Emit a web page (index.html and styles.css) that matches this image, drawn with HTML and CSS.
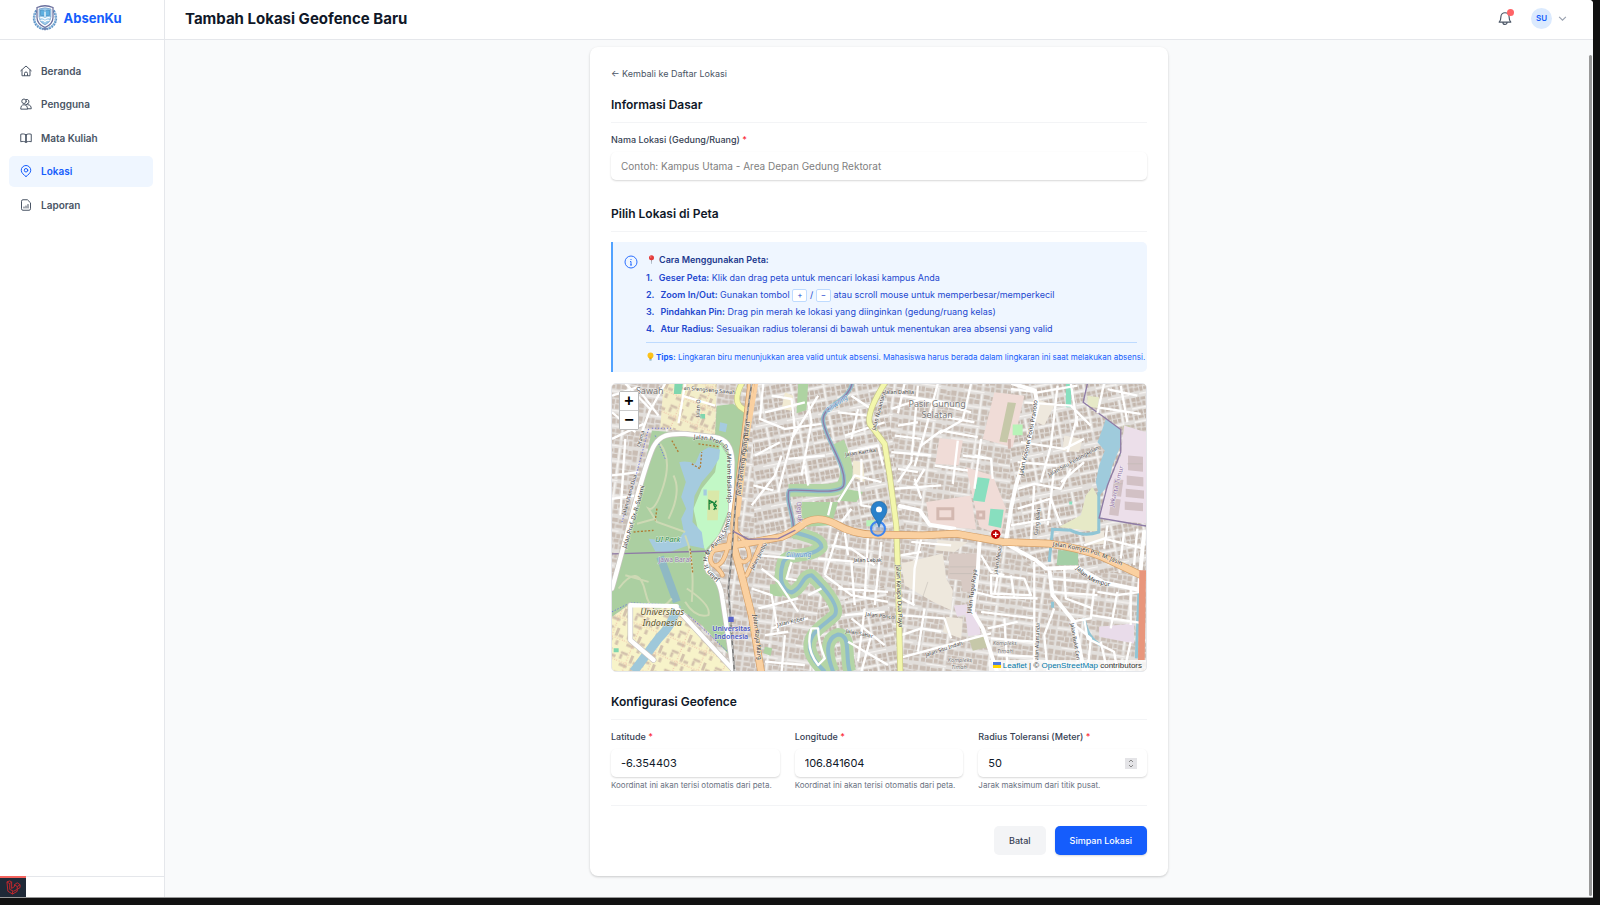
FILE: index.html
```html
<!DOCTYPE html>
<html lang="id">
<head>
<meta charset="utf-8">
<title>Tambah Lokasi Geofence Baru - AbsenKu</title>
<link rel="stylesheet" href="styles.css">
</head>
<body>
<div class="app">
  <aside class="sidebar">
    <a class="brand" href="#">
      <svg class="brand-logo" viewBox="0 0 52 52" aria-hidden="true">
        <g fill="none" stroke="#5f95c8" stroke-width="5" stroke-dasharray="4 1.5"><path d="M9 11C-1 27 5 43 22 48"/><path d="M43 11C53 27 47 43 30 48"/></g>
        <g fill="none" stroke="#8fb9dd" stroke-width="2"><path d="M5 16c-3 14 3 26 15 31M47 16c3 14-3 26-15 31"/></g>
        <path d="M10 5Q26-2 42 5v20q0 13-16 20Q10 38 10 25z" fill="#fff" stroke="#6a6f9d" stroke-width="2.5"/>
        <path d="M14 8q12-5 24 0v16q0 10-12 16Q14 34 14 24z" fill="#9ccbea" stroke="#5a82ba"/>
        <path d="M17 10q6-1 9 3 3-4 9-3v11q-6-1-9 3-3-4-9-3z" fill="#5eb0e0" stroke="#377eb2"/>
        <path d="M26 13v11M15 26q6-2 11 2 5-4 11-2M17 31q5-2 9 2 4-4 9-2" fill="none" stroke="#fff" stroke-width="2.5"/>
        <path d="M20 48l6-5 6 5-6 3z" fill="#7188b5"/>
      </svg>
      <span>AbsenKu</span>
    </a>
    <nav class="nav">
      <a class="nav-item" href="#"><svg class="icon" viewBox="0 0 24 24"><path d="M1.500 11.500 12 2l10.500 9.500M4 10v11.500h16V10M9 21v-4a3 3 0 0 1 6 0v4"/></svg>Beranda</a>
      <a class="nav-item" href="#"><svg class="icon" viewBox="0 0 24 24"><circle cx="8" cy="6.500" r="4.500"/><path d="M12 3a4.500 4.500 0 1 1 3 8.500M1.500 21.500c0-5 2-8 6.500-8s7 3 7 8zM16 13.500c4-.5 6.500 3 6.500 8H15M11 14l5-2.500"/></svg>Pengguna</a>
      <a class="nav-item" href="#"><svg class="icon" viewBox="0 0 24 24"><path d="M12 5.500C9 3.500 5 3.500 1.500 4.500v15C5 18.500 9 18.500 12 20.500zM12 5.500c3-2 7-2 10.500-1v15C19 18.500 15 18.500 12 20.500z"/></svg>Mata Kuliah</a>
      <a class="nav-item nav-item-active" href="#" aria-current="page"><svg class="icon" viewBox="0 0 24 24"><path d="M12 23c-4-3-9.500-7-9.500-12.500a9.500 9.500 0 0 1 19 0C21.500 16 16 20 12 23z"/><circle cx="12" cy="10.500" r="3.500"/></svg>Lokasi</a>
      <a class="nav-item" href="#"><svg class="icon" viewBox="0 0 24 24"><path d="M14 1.500H6a3 3 0 0 0-3 3v15a3 3 0 0 0 3 3h12a3 3 0 0 0 3-3V8.500zM8 18v-2M12 18v-4M16 18v-7"/></svg>Laporan</a>
    </nav>
    <div class="sidebar-foot"></div>
  </aside>

  <header class="topbar">
    <h1>Tambah Lokasi Geofence Baru</h1>
    <div class="topbar-tools">
      <button class="bell" type="button" aria-label="Notifikasi">
        <svg class="icon" viewBox="0 0 24 24"><path d="M2 19h20c-2-2-3-4-3-9a7 7 0 0 0-14 0c0 5-1 7-3 9zM8.500 19.500a3.500 3.500 0 0 0 7 0"/></svg>
        <span class="bell-dot"></span>
      </button>
      <button class="profile" type="button" aria-label="Profil">
        <span class="avatar">SU</span>
        <svg class="chevron" viewBox="0 0 8 8"><path d="M1 2.500l3 3 3-3"/></svg>
      </button>
    </div>
  </header>

  <main class="main">
    <form class="card">
      <a class="back" href="#">← Kembali ke Daftar Lokasi</a>

      <section>
        <h2>Informasi Dasar</h2>
        <div class="field">
          <label for="nama">Nama Lokasi (Gedung/Ruang) <b class="req">*</b></label>
          <input id="nama" type="text" placeholder="Contoh: Kampus Utama - Area Depan Gedung Rektorat">
        </div>
      </section>

      <section class="section-map">
        <h2>Pilih Lokasi di Peta</h2>
        <div class="info">
          <svg class="info-icon" viewBox="0 0 14 14"><circle cx="7" cy="7" r="6"/><path d="M7 6.500v3.500M6 6.500h1M6 10h2M7 4v1"/></svg>
          <div class="info-body">
            <h3><svg class="emoji" viewBox="0 0 10 10"><path d="M4.500 5h1L5.200 10h-.4z" fill="#8795a1"/><circle cx="5" cy="3" r="2.800" fill="#e23b3b"/><circle cx="4.200" cy="2.200" r=".8" fill="#ff8a80"/></svg>Cara Menggunakan Peta:</h3>
            <ol class="steps">
              <li><span class="num">1.</span><strong>Geser Peta:</strong> Klik dan drag peta untuk mencari lokasi kampus Anda</li>
              <li><span class="num">2.</span><strong>Zoom In/Out:</strong> Gunakan tombol <kbd>+</kbd> / <kbd>−</kbd> atau scroll mouse untuk memperbesar/memperkecil</li>
              <li><span class="num">3.</span><strong>Pindahkan Pin:</strong> Drag pin merah ke lokasi yang diinginkan (gedung/ruang kelas)</li>
              <li><span class="num">4.</span><strong>Atur Radius:</strong> Sesuaikan radius toleransi di bawah untuk menentukan area absensi yang valid</li>
            </ol>
            <p class="tips"><svg class="emoji" viewBox="0 0 10 10"><circle cx="5" cy="3.800" r="3.300" fill="#fcc21b"/><path d="M3.500 6h3l-.3 2H3.800z" fill="#f2a600"/><path d="M3.800 8h2.400v1.500H3.800z" fill="#82aec0"/></svg><strong>Tips:</strong> Lingkaran biru menunjukkan area valid untuk absensi. Mahasiswa harus berada dalam lingkaran ini saat melakukan absensi.</p>
          </div>
        </div>

        <div class="map">
          <svg class="map-canvas" viewBox="20 23 1606 867" preserveAspectRatio="xMidYMid slice" role="img" aria-label="Peta lokasi">
            <defs>
              <pattern id="houses" width="132" height="104" patternUnits="userSpaceOnUse" patternTransform="rotate(8)">
                <path fill="#c9bdb4" d="M3 4h17v13H3zM23 2h10v16H23zM36 5h19v10H36zM58 3h11v14H58zM80 3h18v12H80zM101 6h9v12h-9zM113 2h16v15h-16zM4 21h9v15H4zM16 23h18v11H16zM38 19h12v16H38zM53 21h16v12H53zM79 20h12v15H79zM94 22h19v10H94zM116 20h12v17h-12zM3 50h14v12H3zM20 48h11v16H20zM34 51h18v10H34zM55 49h14v13H55zM79 47h18v15H79zM100 50h11v13h-11zM114 48h14v14h-14zM4 67h20v10H4zM27 66h12v15H27zM43 65h10v12H43zM56 66h13v15H56zM80 66h10v14H80zM93 65h16v11H93zM112 67h16v14h-16zM3 82h12v12H3zM18 84h20v11H18zM42 81h11v13H42zM56 85h14v10H56zM79 84h16v10H79zM99 81h10v15H99zM113 85h15v10h-15z"/>
                <path fill="none" stroke="#f6f4f2" stroke-width="4" d="M0 42h74V0M74 42v40M74 42h30M20 100h60"/>
              </pattern>
              <pattern id="dense" width="96" height="122" patternUnits="userSpaceOnUse" patternTransform="rotate(-11)">
                <path fill="#c3b6ac" d="M3 3h13v11H3zM18 2h10v14H18zM31 4h14v9H31zM48 2h8v13h-8zM67 3h12v12H67zM82 2h11v14H82zM4 17h10v12H4zM17 19h14v9H17zM34 16h9v14h-9zM46 18h11v11H46zM68 18h9v13h-9zM80 19h13v9H80zM3 42h12v10H3zM18 40h12v14H18zM33 42h10v11H33zM46 40h12v13H46zM67 40h14v10H67zM84 41h9v14h-9zM3 56h9v14H3zM15 57h15v9H15zM33 56h12v13H33zM48 56h9v12h-9zM67 54h10v14H67zM80 58h13v9H80zM3 81h14v9H3zM20 80h9v13h-9zM32 82h13v9H32zM48 80h10v13H48zM67 80h12v12H67zM82 81h11v10H82zM3 94h11v13H3zM17 96h13v10H17zM33 94h9v14h-9zM45 96h12v9H45zM67 96h14v10H67zM84 94h9v13h-9z"/>
                <path fill="none" stroke="#f6f4f2" stroke-width="4" d="M0 35h70M62 0v80M0 75h62M30 115h66"/>
              </pattern>
              <pattern id="campus" width="70" height="62" patternUnits="userSpaceOnUse" patternTransform="rotate(22)">
                <path fill="#d3c2ad" d="M5 5h22v8H5zM5 15h8v14H5zM38 6h9v25h-9zM50 22h14v9H50zM12 40h25v9H12zM48 42h9v14h-9z"/>
                <path fill="none" stroke="#e79a90" stroke-width="2" stroke-dasharray="3 5" d="M30 0v62M0 36h70"/>
              </pattern>
              <path id="road-agung" d="M406 362 414 300 440 90"/>
              <path id="road-wiyata" d="M266 190C330 193 362 208 366 240L368 420"/>
              <path id="road-sujadi" d="M62 520C80 470 90 430 130 290"/>
              <path id="road-panda" d="M342 612C300 580 296 550 325 520 372 475 382 440 378 340"/>
              <path id="road-jasin" d="M1345 512C1440 524 1520 546 1612 606"/>
              <path id="road-kelapa" d="M874 570 886 850"/>
              <path id="road-kolonel" d="M1256 300C1270 220 1290 170 1304 40"/>
              <path id="road-tugu" d="M1100 715 1124 535"/>
              <path id="road-mempor" d="M1415 580C1450 620 1480 632 1570 640"/>
              <path id="road-raya" d="M444 720 462 889"/>
            </defs>

            <rect x="20" y="23" width="1606" height="867" fill="#e2dfdc"/>
            <rect x="20" y="23" width="1606" height="867" fill="url(#houses)"/>
            <path fill="#e2dfdc" d="M440 23h400l60 440-300-30-150 70zM1220 23h406v570h-330l-80-90zM640 700l200-70 50 260H620z"/>
            <path fill="url(#dense)" d="M440 23h400l60 440-300-30-150 70zM1220 23h406v570h-330l-80-90zM640 700l200-70 50 260H620z"/>

            <!-- land use -->
            <path fill="#f3eec9" d="M175 23h160l-5 155-120-15-45-5z"/><path fill="url(#campus)" d="M175 23h160l-5 155-120-15-45-5z"/>
            <path fill="#f7f3c9" d="M70 690 215 700 390 890H20V725z"/><path fill="url(#campus)" d="M70 690 215 700 390 890H20V725z"/>
            <path fill="#abcfa1" d="M140 165 330 180 335 90 385 85 418 110 395 300 380 440 322 520 310 570 348 640 378 760 372 840 290 750 215 695 70 688 20 725V640L60 520 100 360z"/>
            <path fill="#c2f8c6" d="M345 205 372 250V400L340 480 300 525 280 470 265 400 290 340 330 290z"/>
            <path fill="#d9e8a9" d="M308 345h35l-5 90h-32z"/>
            <path fill="#a5cbdf" d="M222 260Q245 255 270 265L285 230 310 215 345 222 342 250 320 285 290 320 268 362 262 440 290 470 297 520 250 510 190 532 150 528 130 490 215 500 236 470 228 430 243 400 228 365 242 320z"/>
            <path fill="#a5cbdf" d="M345 140l22 5-5 25-20-5zM295 342h10v18h-10z"/>
            <path fill="none" stroke="#8fb9c4" stroke-width="24" d="M165 545 215 680"/>
            <path fill="none" stroke="#9fc8da" stroke-width="27" d="M213 692Q210 740 160 790L85 890"/>
            <path fill="#7fd6ae" d="M208 25h25l-5 30h-22zM285 115h15v14h-15zM25 820h15v12H25z"/>
            <path fill="#aed3a2" d="M590 380h110l-20 70-90 5zM495 627h36v38l-36-5zM480 815l22 5-5 22-22-8zM720 340l55 10-20 30-60-5zM580 23h30l-5 80-30 10z"/>
            <path fill="#f1ead2" d="M745 255l30 5 5 60-35-15zM540 50l25 10-5 45-30-5z"/>
            <path fill="#f0dcd7" d="M1170 50 1260 60 1225 215 1135 190zM1005 188 1075 195 1062 270 992 265zM965 380 1100 360 1115 462 975 450zM1085 275 1165 300 1205 400 1190 480 1125 455z"/>
            <path fill="none" stroke="#d3b8b0" stroke-width="9" d="M1000 400h45v30h-45zM1120 410h18v18h-18zM1215 190v30"/>
            <path fill="#c6c8a9" d="M1210 80 1235 82 1208 201 1185 198zM1095 795l40-15 20 35-50 12zM1557 150h22v65h-22z"/>
            <path fill="#88dfbf" d="M1120 305 1156 310 1141 380 1105 375zM1158 400 1198 403 1190 458 1152 450zM1550 232h7v16h-7zM1562 232h8v16h-8zM1540 270h14v17h-14zM1395 378h9v9h-9zM1385 25h16v70h-16z"/>
            <path fill="#b8f3b8" d="M1225 147h30v32h-30zM950 640h18v16h-18zM785 435h25v18h-25z"/>
            <path fill="#a4cfa7" d="M1362 525h60v45h-65z"/>
            <path fill="#eee8dd" d="M890 565 1015 535 1025 610 1045 645 1040 705 985 680 900 630zM1000 495l90 5-40 30-60-5zM1025 725l50 5-5 60-55-20zM1300 70l50 20-30 60-35-15zM1380 180l55 10-10 40-50-5zM1440 480l60-15v40l-55 5z"/>
            <path fill="#d8cac4" d="M1035 535h85v80h-20v35h-25l-5-35-40-5z"/>
            <path fill="#e9dcea" d="M1048 692l40-5v30l-30 8zM1082 715l35-5 12 68-38 5zM1485 755l105-10v60l-105-20z"/>
            <path fill="#ecdfea" d="M1560 150 1626 170V445L1485 430 1508 340 1550 240z"/>
            <path fill="#d2c1c5" d="M1530 310l28 4-7 50-28-4zM1522 368l28 4-7 50-28-4zM1572 240l45 4v45l-45-5zM1568 300l50 5v28l-50-5zM1565 340l55 5v25l-55-5zM1562 378l55 5v25l-55-5z"/>
            <path fill="#e6e9c7" d="M1465 335 1485 370 1480 470 1365 455 1430 420 1445 360zM1450 60l35 5-5 32-30-5z"/>
            <path fill="#9fcbdc" d="M1505 130 1550 162V210L1525 270 1512 330 1485 362 1475 320 1485 270 1502 225 1480 200 1495 160z"/>
            <path fill="none" stroke="#90c5d5" stroke-width="9" d="M1484 350V470Q1440 485 1400 465L1345 462 1335 560M1440 730Q1450 790 1490 810M1605 640 1597 850M1345 680v18"/>

            <!-- river -->
            <path fill="none" stroke="#b4d5a6" stroke-width="38" stroke-linejoin="round" d="M700 200C730 270 730 300 715 330 690 355 600 340 552 345M565 470C600 480 650 490 650 515 620 550 550 530 535 560 520 610 530 645 560 652 595 640 590 600 620 600 640 620 710 690 690 720 660 750 610 770 615 820 620 850 640 870 660 890M685 890C665 840 660 790 700 778 740 780 720 840 735 890"/>
            <path fill="none" stroke="#8fbccb" stroke-width="12" stroke-linejoin="round" d="M742 23C730 80 650 90 655 135 660 190 732 280 716 332 700 360 600 340 552 345 540 380 570 420 565 470 600 480 650 490 650 515 620 550 550 530 535 560 520 610 530 645 560 652 595 640 590 600 620 600 640 620 710 690 690 720 660 750 610 770 615 820 620 850 640 870 660 890M685 890C665 840 660 790 700 778 740 780 720 840 735 890"/>
            <path fill="none" stroke="#8e7ba6" stroke-width="4" d="M742 23C730 80 650 90 655 135 660 190 732 280 716 332 700 360 600 340 552 345 540 380 570 420 565 465L520 490 430 492 385 468M20 536 300 528 385 500M1450 23 1437 80 1500 125 1550 162V230L1510 330 1485 428 1626 452"/>

            <!-- minor streets -->
            <g fill="none" stroke="#fff" stroke-width="7" stroke-linejoin="round">
              <path d="M20 60 95 35 160 120M60 23 135 100 110 170M20 190l95-45M20 300l80-10M20 370l75-10M60 190 45 420M180 23l-50 90M20 110l70 60M230 60l100 30M240 23l-20 120"/>
              <path d="M475 23 465 130 540 160 650 145M500 60l60 10 10 90-30 110-20 80M610 80l10 60-30 160M450 240l75-40M440 390 510 300l20-60M445 330l60 15M640 60 560 190M660 240l-110 10M600 270l10 60M480 110l120-30"/>
              <path d="M740 60l60 40M700 110l90 10M720 180l120-40M730 230l90-20 15 60M700 380l50-80 80 20M760 100l-20 90M760 320l10 70 60 10M680 380l-10 40M740 400l-30 40M770 250v70"/>
              <path d="M460 540l110 10M470 580l50 40 60 90M440 640l60 20 20 110M460 700l120-30M560 560l-15 50 30 5M500 760l110-30M480 780l70-10M610 660l40-20M700 470l-40 130M680 510l60 10 70 50M720 470l10 70M640 550l120 10M660 600l80 60 110 20M740 560l10 130M700 640l150 10M790 480l-10 190M830 500l-20 190M720 720l120-10M740 730l100 80M780 700l-20 160M730 800l120 70M800 780l-30 110M480 860l120 10M540 780l-10 110M620 760q-20 60 20 110l20-20q-20-50-20-90z"/>
              <path d="M860 100l90-30 150 40M900 23l-20 90M940 30 920 260l-40 60M1000 23l-40 150-30 100M870 180l80 10M1100 23l-25 110-70 40M950 210l60-45 110 20M860 230l120 10M870 340l140-10M990 270l100 15M880 280l60 10M1060 195l-15 130M930 310l20 60M1075 240l85 10M1130 190l-20 150M890 60l130 20M880 150l60-10M1000 120l110 20M960 280l-30 50M1110 240l50 10 5 60"/>
              <path d="M1220 40l80 10 120-20M1260 80l140 10 60 60M1250 200l130 20 60-30M1360 30l-20 180-30 110M1420 120l-30 110M1240 340l50-15 80 15 30-60M1240 400l100-30 30 80M1220 450l120-20M1290 330l-10 170M1400 23l20 130M1510 40l90 20M1480 95l130 20M1500 23l-20 90M1550 30l20 110M1240 260l120 10M1330 450l20-170M1440 260l-70 60"/>
              <path d="M920 500l120 10M950 490l-20 90-5 110M890 540l60-10M880 720l140 10 20 60M890 780l60-20 60 10M880 850l280-75M870 660l60 30M960 700l-20 130M1130 540l30 50 40 10M1160 600l100 10 20 50-120-5zM1180 600l-10 60M1220 600l10 70M1290 560v330M1130 710l160 20M1150 760l90-20M1160 790l130 10M1180 840l110 5M1200 730l10 160M1110 650l60 15 130 5"/>
              <path d="M1340 610l110 10M1380 580l5 90 80 30M1340 650l140 10M1470 640l-10 90-60 10M1460 720l160 25M1480 650l60 10 70-10M1540 650l-20 110M1580 640v110M1440 730l10 60 80 40 10 60M1490 800l20 90M1580 800l-20 90M1350 700l-30 80 10 110M1400 740l60 50-10 100M1440 510l60-20 120 30M1510 450l-10 70M1560 470l-10 80M1600 460l-10 110"/>
            </g>
            <g fill="none" stroke="#bcb6b1" stroke-width="1.500"><path d="M1035 575h85M1035 595h85M1530 325h25M1570 265h45M970 620l-20 60M905 240l80 10"/></g>
            <g fill="none" stroke="#cdd9b4" stroke-width="6"><path d="M165 205Q200 250 175 330T130 400L155 440 240 470M150 430 95 445M205 300Q230 350 190 430M240 480Q270 550 260 680M40 640Q100 560 120 650T200 670M60 600l70 20M245 640Q320 690 310 720 270 730 240 680"/></g>
            <g fill="none" stroke="#b07b34" stroke-width="4" stroke-dasharray="6 5"><path d="M200 195l20 35M280 205l60 8M260 265l25 15 5-50M155 400l-5 35M85 470l60-5M255 520l8 75"/></g>
            <g fill="none" stroke="#7277e0" stroke-width="3" stroke-dasharray="4 5"><path d="M130 160 95 290 50 440M140 158h60M150 180l30 70M20 710 75 683 215 690M250 720 370 832 350 640"/></g>

            <!-- white secondary roads -->
            <g fill="none" stroke-linejoin="round" stroke-linecap="round">
              <path stroke="#c8c5c0" stroke-width="17" d="M20 640C60 500 120 250 148 208 165 180 190 173 240 175L330 185Q380 192 382 260L378 400Q375 450 328 510 292 560 310 590 345 610 352 670L385 890M75 690v105l70 60M215 700 385 885"/>
              <path stroke="#fff" stroke-width="13" d="M20 640C60 500 120 250 148 208 165 180 190 173 240 175L330 185Q380 192 382 260L378 400Q375 450 328 510 292 560 310 590 345 610 352 670L385 890M75 690v105l70 60M75 690l140 3M215 700 385 885"/>
              <path stroke="#fff" stroke-width="12" d="M1225 23 1292 45 1300 90 1265 230 1235 330 1220 400 1205 495M1205 505 1295 555 1325 580 1420 577 1500 622 1612 645M1335 580 1345 660 1410 740 1440 890M1125 500 1120 590 1105 710 1135 760 1178 890M885 392 945 405 975 448 1050 460M1620 470 1605 640"/>
            </g>

            <!-- main roads -->
            <g fill="none" stroke-linejoin="round" stroke-linecap="round">
              <path stroke="#c8c98a" stroke-width="18" d="M840 23Q785 110 795 145L840 205 855 300 875 450 880 600 887 895M410 23q-25 50-5 70l25 18"/>
              <path stroke="#f3f7ac" stroke-width="14" d="M840 23Q785 110 795 145L840 205 855 300 875 450 880 600 887 895M410 23q-25 50-5 70l25 18"/>
              <path stroke="#d6a068" stroke-width="23" d="M440 15 405 300 388 430 388 520 410 600 440 720 470 900M330 520 530 485Q565 470 600 442 640 420 690 445 750 480 820 478L955 480 1055 475 1195 500 1335 505Q1435 520 1495 545L1622 605"/>
              <path stroke="#d6a068" stroke-width="14" d="M330 520Q305 550 325 570 360 580 375 480M395 470Q440 520 432 550 415 570 400 550M470 500Q440 570 425 600M330 572Q350 590 352 600"/>
              <path stroke="#fad0a0" stroke-width="19" d="M440 15 405 300 388 430 388 520 410 600 440 720 470 900M330 520 530 485Q565 470 600 442 640 420 690 445 750 480 820 478L955 480 1055 475 1195 500 1335 505Q1435 520 1495 545L1622 605"/>
              <path stroke="#fad0a0" stroke-width="10" d="M330 520Q305 550 325 570 360 580 375 480M395 470Q440 520 432 550 415 570 400 550M470 500Q440 570 425 600M330 572Q350 590 352 600M455 20 425 200 400 420"/>
              <path stroke="#777" stroke-width="5" d="M440 23 395 340 378 560 370 640 388 890"/>
              <path stroke="#c9c9c9" stroke-width="3" stroke-dasharray="12 12" stroke-linecap="butt" d="M440 23 395 340 378 560 370 640 388 890"/>
              <path stroke="#e8967c" stroke-width="20" stroke-linecap="butt" d="M1616 585 1612 855"/>
              <path stroke="#8e7ba6" stroke-width="4" d="M385 468 430 492 520 490 570 465"/>
            </g>

            <!-- symbols -->
            <path fill="none" stroke="#16843a" stroke-width="4" d="M312 403v-28l10 5-10 5M334 376l-8 12 8 14M320 378l14 12-8 14"/>
            <path fill="#5963c8" d="M370 725h16v16h-16z"/>
            <circle cx="1174" cy="477" r="14" fill="#bf0000"/><path stroke="#fff" stroke-width="4" d="M1166 477h16M1174 469v16"/>

            <!-- labels -->
            <g class="map-place">
              <text x="92" y="54">Sawah</text>
              <text x="998" y="95" text-anchor="middle">Pasir Gunung</text><text x="998" y="128" text-anchor="middle">Selatan</text>
            </g>
            <g class="map-green"><text x="150" y="499">UI Park</text></g>
            <g class="map-campus"><text x="171" y="719" text-anchor="middle">Universitas</text><text x="171" y="752" text-anchor="middle">Indonesia</text></g>
            <g class="map-station"><text x="379" y="767" text-anchor="middle">Universitas</text><text x="379" y="792" text-anchor="middle">Indonesia</text></g>
            <g class="map-border"><text x="160" y="561">Jawa Barat</text><text transform="translate(1528 395)rotate(-76)">Jakarta Timur</text><text transform="translate(575 380)rotate(85)">Depok</text></g>
            <g class="map-water"><text x="543" y="545">Ciliwung</text><text transform="translate(668 112)rotate(-35)">Ciliwung</text></g>
            <g class="map-road">
              <text><textPath href="#road-agung">Jalan Lenteng Agung Barat</textPath></text>
              <text><textPath href="#road-wiyata">Jalan Prof. Dr. Miriam Budiardjo</textPath></text>
              <text><textPath href="#road-sujadi">Jalan Prof. Dr. R. Sutami</textPath></text>
              <text><textPath href="#road-panda">Jalan Ir. H.M. Pandji Soeroso</textPath></text>
              <text><textPath href="#road-jasin">Jalan Komjen Pol. M. Jasin</textPath></text>
              <text><textPath href="#road-kelapa">Jalan Kelapa Dua Raya</textPath></text>
              <text><textPath href="#road-kolonel">Jalan Kolonel Polisi Pranoto</textPath></text>
              <text><textPath href="#road-tugu">Jalan Tugu Raya</textPath></text>
              <text><textPath href="#road-mempor">Jalan Mempor</textPath></text>
              <text><textPath href="#road-raya">Jalan Raya Marg</textPath></text>
            </g>
            <g class="map-street">
              <text transform="translate(722 243)rotate(-9)">Jalan Kartika</text>
              <text x="746" y="560">Jalan Lebak</text>
              <text transform="translate(518 755)rotate(-14)">Jalan Kober</text>
              <text transform="translate(722 772)rotate(12)">Jalan Sahar</text>
              <text transform="translate(782 722)rotate(7)">Jalan Poncol</text>
              <text x="840" y="54">Jalan Dahlia</text>
              <text transform="translate(964 845)rotate(-18)">Jalan Situ Indah</text>
              <text transform="translate(1178 597)rotate(-80)">Jalan Melati</text>
              <text transform="translate(1335 303)rotate(-29)">Jalan Situ Pedongkelan</text>
              <text transform="translate(1300 480)rotate(-84)">Gang Bakti</text>
              <text transform="translate(1398 745)rotate(80)">Jalan Bukit Cen</text>
              <text transform="translate(1302 860)rotate(-88)">Jalan Alamanda</text>
              <text transform="translate(445 584)rotate(-62)">Jalan Jambu</text>
              <text transform="translate(235 42)rotate(5)">an Srengseng Sawah</text>
              <text transform="translate(105 215)rotate(-75)">Utama</text>
              <text transform="translate(60 420)rotate(-74)">Jalan Utama Dua</text>
              <text transform="translate(812 165)rotate(-75)">Jalan Nusantara</text>
              <text transform="translate(283 125)rotate(-88)">Jalan O</text>
            </g>
            <g class="map-estate"><text x="1165" y="811">Kompleks</text><text x="1178" y="833">Timah</text><text x="1030" y="862">Kompleks</text><text x="1040" y="882">Timah</text></g>

            <circle cx="820" cy="460" r="21" fill="#3388ff" fill-opacity=".2" stroke="#3c84f0" stroke-width="6"/>
            <path d="M823 456C817 430 799 422 799 402a24 24 0 0 1 48 0c0 20-18 28-24 54z" fill="#2a81cb" stroke="#2068a5" stroke-width="2"/>
            <circle cx="823" cy="402" r="9" fill="#fff"/>
          </svg>
          <div class="zoom">
            <button type="button" aria-label="Perbesar">+</button>
            <button type="button" aria-label="Perkecil">−</button>
          </div>
          <div class="attribution">
            <svg class="flag" viewBox="0 0 8 6"><path fill="#4c7be1" d="M0 0h8v3H0z"/><path fill="#ffd500" d="M0 3h8v3H0z"/></svg>
            <a href="#">Leaflet</a> | © <a href="#">OpenStreetMap</a> contributors
          </div>
        </div>
      </section>

      <section class="section-config">
        <h2>Konfigurasi Geofence</h2>
        <div class="columns">
          <div class="field">
            <label for="lat">Latitude <b class="req">*</b></label>
            <input id="lat" type="text" value="-6.354403">
            <p class="help">Koordinat ini akan terisi otomatis dari peta.</p>
          </div>
          <div class="field">
            <label for="lng">Longitude <b class="req">*</b></label>
            <input id="lng" type="text" value="106.841604">
            <p class="help">Koordinat ini akan terisi otomatis dari peta.</p>
          </div>
          <div class="field">
            <label for="radius">Radius Toleransi (Meter) <b class="req">*</b></label>
            <div class="number">
              <input id="radius" type="number" value="50">
              <svg class="spinner" viewBox="0 0 12 11" aria-hidden="true"><path d="M4 4l2-2 2 2M4 7l2 2 2-2"/></svg>
            </div>
            <p class="help">Jarak maksimum dari titik pusat.</p>
          </div>
        </div>
      </section>

      <div class="actions">
        <button class="btn btn-plain" type="button">Batal</button>
        <button class="btn btn-primary" type="submit">Simpan Lokasi</button>
      </div>
    </form>
  </main>

  <div class="scroll-thumb"></div>
  <button class="debug" type="button" aria-label="Debugbar">
    <svg viewBox="0 0 16 16"><path d="M1 2l3-1 2 1v7l3-2V5l3-2 3 2v3l-3 2v2l-5 3-5-3zM1 2l3 2 2-2M4 4v6l4 2 4-2M9 5l3 2 3-2M12 7v3M7 15v-3"/></svg>
  </button>
</div>
</body>
</html>
```
FILE: styles.css
```css
* {
  box-sizing: border-box;
}

body {
  margin: 0;
  background: #111;
  color: #101828;
  font-family: Inter, "Liberation Sans", sans-serif;
  font-size: 9px;
}

h1, h2, h3, p, ol {
  margin: 0;
  padding: 0;
}

a {
  color: inherit;
  text-decoration: none;
}

button, input {
  margin: 0;
  border: 0;
  padding: 0;
  background: none;
  color: inherit;
  font: inherit;
}

.app {
  position: relative;
  display: grid;
  grid-template-columns: 165px 1fr;
  grid-template-rows: 40px 1fr;
  min-height: calc(100vh - 7px);
  margin: 0 7px 7px 0;
  border-bottom: 1px solid #999;
  border-top-right-radius: 4px;
  background: #f9fafb;
  overflow: hidden;
}

.icon {
  flex: none;
  width: 12px;
  height: 12px;
  fill: none;
  stroke: currentColor;
  stroke-width: 2;
  stroke-linecap: round;
  stroke-linejoin: round;
}

/* Sidebar */
.sidebar {
  display: flex;
  flex-direction: column;
  grid-row: 1 / 3;
  border-right: 1px solid #e5e7eb;
  background: #fff;
}

.brand {
  display: flex;
  align-items: center;
  justify-content: center;
  gap: 5px;
  height: 40px;
  border-bottom: 1px solid #e5e7eb;
  padding: 0 10px 3px 0;
  color: #155dfc;
  font-size: 13px;
  font-weight: 700;
}

.brand-logo {
  width: 26px;
  height: 26px;
}

.nav {
  display: flex;
  flex-direction: column;
  justify-content: space-between;
  height: 165px;
  margin: 15px 11px 0 9px;
}

.nav-item {
  display: flex;
  align-items: center;
  gap: 9px;
  height: 31px;
  border-radius: 5px;
  padding: 0 11px;
  color: #4a5565;
  font-size: 10px;
  font-weight: 600;
}

.nav-item-active {
  background: #eff6ff;
  color: #155dfc;
}

.sidebar-foot {
  height: 21px;
  margin-top: auto;
  border-top: 1px solid #e5e7eb;
}

/* Top bar */
.topbar {
  display: flex;
  align-items: center;
  justify-content: space-between;
  border-bottom: 1px solid #e5e7eb;
  padding: 0 26px 3px 20px;
  background: #fff;
}

.topbar h1 {
  font-size: 15px;
  font-weight: 700;
}

.topbar-tools,
.profile {
  display: flex;
  align-items: center;
}

.topbar-tools {
  gap: 19px;
}

.profile {
  gap: 6px;
}

.bell {
  position: relative;
  display: flex;
  color: #4a5565;
}

.bell .icon {
  width: 14px;
  height: 14px;
}

.bell-dot {
  position: absolute;
  top: -2px;
  right: -2px;
  width: 7px;
  height: 7px;
  border-radius: 50%;
  background: #ff6467;
}

.avatar {
  display: grid;
  place-items: center;
  width: 21px;
  height: 21px;
  border-radius: 50%;
  background: #dbeafe;
  color: #155dfc;
  font-size: 8px;
  font-weight: 600;
}

.chevron {
  width: 9px;
  height: 9px;
  fill: none;
  stroke: #99a1af;
  stroke-width: 1;
}

/* Form card */
.main {
  padding: 7px 20px 21px;
}

.card {
  display: flex;
  flex-direction: column;
  max-width: 578px;
  margin: 0 auto;
  border-radius: 8px;
  padding: 21px;
  background: #fff;
  box-shadow: 0 1px 3px rgb(0 0 0 / 12%), 0 1px 2px rgb(0 0 0 / 8%);
}

.back {
  align-self: flex-start;
  margin-bottom: 17px;
  color: #4a5565;
  line-height: 12px;
}

.card h2 {
  margin-bottom: 10px;
  border-bottom: 1px solid #f3f4f6;
  padding-bottom: 9px;
  font-size: 12px;
  font-weight: 600;
  line-height: 16px;
}

.section-map {
  margin-top: 26px;
}

.section-config {
  margin-top: 22px;
}

.field {
  display: flex;
  flex-direction: column;
}

.field label {
  margin-bottom: 5px;
  color: #364153;
  font-weight: 500;
  line-height: 14px;
}

.req {
  color: #fb2c36;
  font-weight: 500;
}

.field input {
  width: 100%;
  height: 28px;
  border-radius: 5px;
  padding: 0 10px;
  background: #fff;
  font-size: 11px;
  box-shadow: 0 1px 2px rgb(0 0 0 / 16%);
}

.field input::placeholder {
  color: #808080;
  font-size: 10px;
}

.number {
  position: relative;
}

.number input {
  appearance: textfield;
}

.number input::-webkit-inner-spin-button {
  display: none;
}

.spinner {
  position: absolute;
  top: 9px;
  right: 10px;
  width: 12px;
  height: 11px;
  background: #e4e4e7;
  fill: none;
  stroke: #888;
}

.help {
  margin-top: 2px;
  color: #6a7282;
  font-size: 8px;
  line-height: 12px;
}

.columns {
  display: grid;
  grid-template-columns: repeat(3, 1fr);
  gap: 15px;
}

/* Instructions */
.info {
  display: flex;
  gap: 8px;
  border-left: 2px solid #51a2ff;
  border-radius: 0 5px 5px 0;
  padding: 9px 10px;
  background: #eff6ff;
}

.info-icon {
  flex: none;
  width: 14px;
  height: 14px;
  margin: 4px 0 0 1px;
  fill: none;
  stroke: #2b6fff;
}

.info-body {
  flex: 1;
  min-width: 0;
}

.info h3 {
  margin-bottom: 1px;
  color: #1c398e;
  font-size: 9px;
  font-weight: 600;
  line-height: 17px;
}

.emoji {
  width: 9px;
  height: 9px;
  margin: 0 3px 0 1px;
  vertical-align: -1px;
}

.steps {
  color: #2348cf;
  line-height: 17px;
  list-style: none;
}

.steps strong,
.num {
  font-weight: 600;
}

.num {
  margin-right: 6px;
}

kbd {
  display: inline-block;
  border: 1px solid #bedbff;
  border-radius: 2px;
  padding: 0 4px;
  background: #fff;
  font-family: inherit;
  font-size: 8px;
  line-height: 11px;
}

.tips {
  margin-top: 5px;
  border-top: 1px solid #bedbff;
  padding-top: 8px;
  color: #155dfc;
  font-size: 8px;
  line-height: 12px;
  white-space: nowrap;
}

.tips .emoji {
  margin: 0 1px 0 0;
}

/* Map */
.map {
  position: relative;
  height: 289px;
  margin-top: 11px;
  border: 1px solid #e5e7eb;
  border-radius: 5px;
  overflow: hidden;
}

.map-canvas {
  display: block;
  width: 100%;
  height: 100%;
  font-family: "Noto Sans", sans-serif;
}

.map-canvas text {
  paint-order: stroke;
  stroke: rgb(255 255 255 / 60%);
  stroke-width: 3px;
}

.map-place { fill: #777; font-size: 27px; }
.map-green { fill: #2c8a4b; font-size: 23px; font-style: italic; }
.map-campus { fill: #5c5426; font-size: 27px; font-style: italic; }
.map-station { fill: #4b56c4; font-size: 21px; font-weight: 600; }
.map-border { fill: #9173a8; font-size: 20px; }
.map-water { fill: #5b93c7; font-size: 20px; font-style: italic; }
.map-road { fill: #333; font-size: 18px; }
.map-street { fill: #444; font-size: 16px; }
.map-estate { fill: #777; font-size: 17px; font-style: italic; }

.zoom {
  position: absolute;
  top: 7px;
  left: 7px;
  display: flex;
  flex-direction: column;
  gap: 1px;
  border: 1px solid #bbb;
  border-radius: 2px;
  background: #ccc;
}

.zoom button {
  width: 18px;
  height: 18px;
  background: #fff;
  color: #000;
  font-family: "Liberation Sans", sans-serif;
  font-size: 16px;
  font-weight: 700;
  line-height: 18px;
}

.attribution {
  position: absolute;
  right: 0;
  bottom: 0;
  padding: 0 4px;
  background: rgb(255 255 255 / 80%);
  color: #333;
  font-family: "Liberation Sans", sans-serif;
  font-size: 8px;
  line-height: 11px;
}

.attribution a {
  color: #0078a8;
}

.flag {
  width: 8px;
  height: 6px;
}

/* Actions */
.actions {
  display: flex;
  justify-content: flex-end;
  gap: 9px;
  margin-top: 14px;
  border-top: 1px solid #f3f4f6;
  padding-top: 20px;
}

.btn {
  height: 29px;
  border-radius: 5px;
  padding: 0 15px;
  font-weight: 500;
}

.btn-plain {
  background: #f3f4f6;
  color: #364153;
}

.btn-primary {
  background: #155dfc;
  color: #fff;
  box-shadow: 0 1px 2px rgb(0 0 0 / 15%);
}

.scroll-thumb {
  position: absolute;
  top: 55px;
  right: 1px;
  bottom: 1px;
  width: 3px;
  border-radius: 2px;
  background: #999;
}

.debug {
  position: absolute;
  bottom: 0;
  left: 0;
  display: grid;
  place-items: center;
  width: 26px;
  height: 21px;
  border-top: 2px solid #f4645f;
  background: #1f2937;
}

.debug svg {
  width: 15px;
  height: 15px;
  fill: none;
  stroke: #c9272d;
}
```
